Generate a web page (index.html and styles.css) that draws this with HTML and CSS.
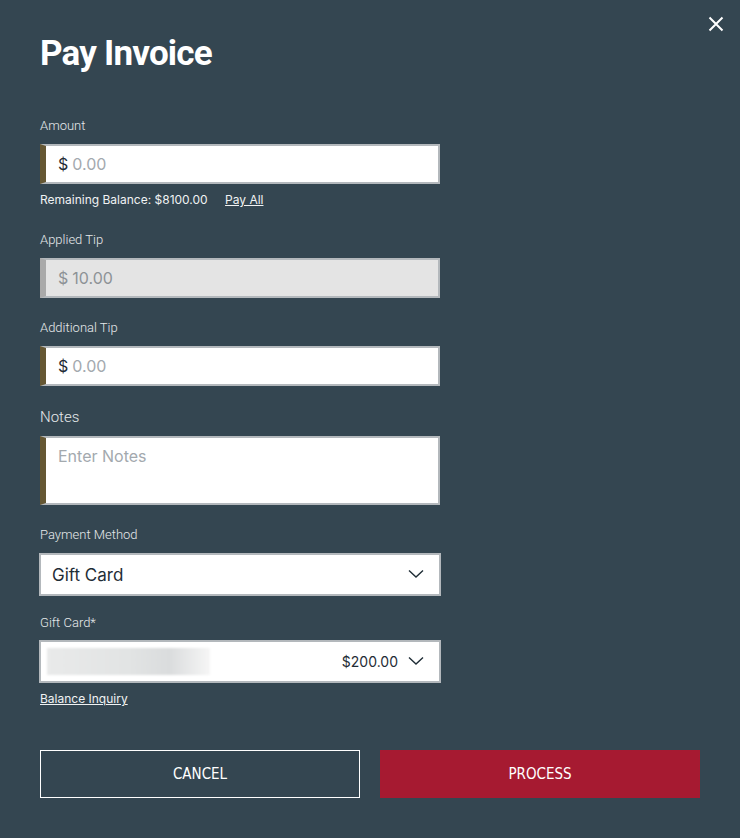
FILE: index.html
```html
<!DOCTYPE html>
<html lang="en">
<head>
    <meta charset="UTF-8">
    <meta name="viewport" content="width=device-width, initial-scale=1.0">
    <title>Pay Invoice</title>
    <link rel="stylesheet" href="styles.css">
</head>
<body>

<div class="modal">
    <button class="close" type="button" aria-label="Close">
        <svg width="16" height="16" viewBox="0 0 16 16"><path d="M1.5 1.5 L14.5 14.5 M14.5 1.5 L1.5 14.5" stroke="#fff" stroke-width="2" fill="none"/></svg>
    </button>
    <h2>Pay Invoice</h2>
    <form id="payForm">
        <div class="form-group">
            <label for="amount">Amount</label>
            <div class="money accent">
                <span class="sign">$</span>
                <input type="text" id="amount" placeholder="0.00">
            </div>
            <div class="hint">Remaining Balance: $8100.00 <a href="#" class="pay-all">Pay All</a></div>
        </div>
        <div class="form-group">
            <label for="appliedTip">Applied Tip</label>
            <div class="money disabled">
                <span class="sign">$</span>
                <input type="text" id="appliedTip" value="10.00" disabled>
            </div>
        </div>
        <div class="form-group">
            <label for="addTip">Additional Tip</label>
            <div class="money accent">
                <span class="sign">$</span>
                <input type="text" id="addTip" placeholder="0.00">
            </div>
        </div>
        <div class="form-group">
            <label for="notes" class="big">Notes</label>
            <textarea id="notes" placeholder="Enter Notes"></textarea>
        </div>
        <div class="form-group tight">
            <label for="method">Payment Method</label>
            <div class="select">
                <span class="value">Gift Card</span>
                <svg width="16" height="10" viewBox="0 0 16 10"><path d="M1 1.5 L8 8 L15 1.5" stroke="#1f2d36" stroke-width="1.4" fill="none"/></svg>
            </div>
        </div>
        <div class="form-group">
            <label class="short">Gift Card*</label>
            <div class="select">
                <span class="masked"></span>
                <span class="amount">$200.00</span>
                <svg width="16" height="10" viewBox="0 0 16 10"><path d="M1 1.5 L8 8 L15 1.5" stroke="#1f2d36" stroke-width="1.4" fill="none"/></svg>
            </div>
            <div class="hint"><a href="#">Balance Inquiry</a></div>
        </div>
        <div class="actions">
            <button type="button" class="btn cancel">CANCEL</button>
            <button type="submit" class="btn process">PROCESS</button>
        </div>
    </form>
</div>

</body>
</html>
```

FILE: styles.css
```css
html, body {
    margin: 0;
    background: #344651;
}
body {
    font-family: Inter, "Noto Sans", sans-serif;
    color: #e6e9eb;
}
.modal {
    position: relative;
    width: 740px;
    height: 838px;
    box-sizing: border-box;
    padding: 34px 40px 0 40px;
}
.close {
    position: absolute;
    top: 16px;
    right: 16px;
    background: none;
    border: none;
    padding: 0;
    cursor: pointer;
}
h2 {
    margin: 0 0 44px 0;
    font-family: Roboto, sans-serif;
    font-weight: bold;
    font-size: 35px;
    letter-spacing: -0.8px;
    line-height: 40px;
    color: #fff;
}
.form-group {
    margin-bottom: 22px;
}
.form-group.tight {
    margin-bottom: 19px;
}
label {
    display: block;
    font-family: Roboto, sans-serif;
    font-weight: 300;
    font-size: 13px;
    line-height: 16px;
    color: #e6e9eb;
    margin-bottom: 10px;
}
label.short {
    margin-bottom: 9px;
}
label.big {
    font-size: 15px;
    line-height: 18px;
}
.money {
    display: flex;
    align-items: center;
    width: 400px;
    height: 40px;
    box-sizing: border-box;
    border: 2px solid #b3b8bc;
    background: #fff;
    padding-left: 12px;
    font-size: 16px;
}
.money.accent, textarea {
    border-left: 6px solid #655733;
}
.money.disabled {
    background: #e4e4e4;
    border-left: 6px solid #a9a9a9;
}
.sign {
    color: #1f2d36;
    margin-right: 4px;
}
.money.disabled .sign, .money.disabled input {
    color: #8d9296;
}
.money input {
    flex: 1;
    border: none;
    background: transparent;
    font-family: inherit;
    font-size: 16px;
    padding: 0;
    outline: none;
}
::placeholder {
    color: #a3a9ae;
}
.hint {
    font-size: 12px;
    line-height: 14px;
    margin-top: 9px;
    padding-bottom: 3px;
    color: #f0f2f3;
}
.hint a {
    color: #f0f2f3;
}
.hint .pay-all {
    margin-left: 14px;
}
textarea {
    display: block;
    width: 400px;
    height: 69px;
    box-sizing: border-box;
    border-top: 2px solid #b3b8bc;
    border-right: 2px solid #b3b8bc;
    border-bottom: 2px solid #b3b8bc;
    padding: 8px 12px;
    font-family: inherit;
    font-size: 16px;
    resize: none;
    outline: none;
}
.select {
    display: flex;
    align-items: center;
    width: 402px;
    height: 43px;
    margin-left: -1px;
    box-sizing: border-box;
    border: 2px solid #b3b8bc;
    background: #fff;
    padding: 0 15px 0 11px;
    font-size: 17px;
    color: #1f2d36;
}
.select .value {
    flex: 1;
}
.select .masked {
    width: 163px;
    height: 27px;
    margin-left: -5px;
    background: linear-gradient(90deg, #e9eaea, #e2e4e4 50%, #dadcdd 75%, #f6f6f6);
    filter: blur(1px);
}
.select .amount {
    margin-left: auto;
    font-size: 14px;
    margin-right: 10px;
}
.select svg {
    margin-top: -2px;
}
.actions {
    display: flex;
    gap: 20px;
    margin-top: 41px;
}
.btn {
    width: 320px;
    height: 48px;
    font-family: "Liberation Sans Narrow", "DejaVu Sans Condensed", sans-serif;
    font-size: 15px;
    color: #fff;
    cursor: pointer;
}
.cancel {
    background: transparent;
    border: 1px solid #fff;
}
.process {
    background: #a61a31;
    border: none;
}
```
